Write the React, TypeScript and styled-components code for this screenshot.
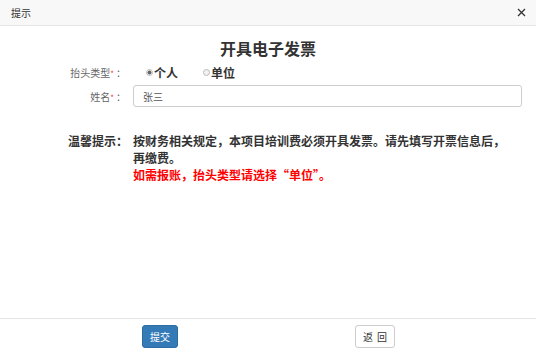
import React from "react";
import styled, { createGlobalStyle } from "styled-components";

const Global = createGlobalStyle`
  html, body { margin: 0; padding: 0; background: #fff; }
  body {
    font-family: "Noto Sans CJK SC", "Liberation Sans", sans-serif;
  }
  * { box-sizing: border-box; }
`;

const Dialog = styled.div`
  width: 536px;
  height: 354px;
  display: flex;
  flex-direction: column;
  background: #fff;
`;

const Header = styled.div`
  height: 26px;
  flex: none;
  display: flex;
  align-items: center;
  justify-content: space-between;
  padding: 0 10px 0 11px;
  background: #f8f8f8;
  border-bottom: 1px solid #e5e5e5;
  font-size: 10px;
  color: #333;
`;

const Close = styled.button`
  border: 0;
  background: transparent;
  padding: 0;
  width: 10px;
  height: 10px;
  display: flex;
  align-items: center;
  justify-content: center;
  cursor: pointer;
`;

const Body = styled.div`
  flex: 1;
  display: flex;
  flex-direction: column;
`;

const Title = styled.h1`
  margin: 12px 0 0;
  height: 20px;
  line-height: 20px;
  text-align: center;
  font-size: 16px;
  font-weight: bold;
  color: #333;
`;

const FormRow = styled.div<{ $mt: number }>`
  display: grid;
  grid-template-columns: 126px 1fr;
  column-gap: 7px;
  align-items: center;
  margin-top: ${(p) => p.$mt}px;
  padding-right: 14px;
`;

const Label = styled.label`
  text-align: right;
  font-size: 10px;
  color: #666;
`;

const Star = styled.span`
  color: #f33;
  font-size: 8px;
  margin-right: 2px;
`;

const Radios = styled.div`
  display: flex;
  gap: 25px;
  padding-left: 13px;
`;

const RadioItem = styled.span`
  display: inline-flex;
  align-items: center;
  font-size: 12px;
  font-weight: bold;
  color: #333;
`;

const Dot = styled.span<{ $on?: boolean }>`
  width: 7px;
  height: 7px;
  border-radius: 50%;
  border: 1px solid #bbb;
  background: ${(p) => (p.$on ? "radial-gradient(circle, #666 0 1.8px, #eee 2.2px)" : "#f2f2f2")};
  margin-right: 1px;
`;

const Input = styled.div`
  height: 22px;
  border: 1px solid #ccc;
  border-radius: 3px;
  padding-left: 9px;
  display: flex;
  align-items: center;
  font-size: 10px;
  color: #555;
`;

const Tip = styled.div`
  display: grid;
  grid-template-columns: 60px 1fr;
  column-gap: 5px;
  margin: 25px 25px 0 68px;
  font-size: 12px;
  font-weight: bold;
  line-height: 17px;
  color: #333;
`;

const Red = styled.span`
  color: #f00;
  display: block;
`;

const Footer = styled.div`
  height: 36px;
  flex: none;
  border-top: 1px solid #e5e5e5;
  display: flex;
  align-items: flex-start;
  padding: 6px 0 0 142px;
  gap: 177px;
`;

const Button = styled.button<{ $primary?: boolean }>`
  height: 23px;
  width: ${(p) => (p.$primary ? 36 : 40)}px;
  padding: 0;
  border-radius: 3px;
  font-family: inherit;
  font-size: 10px;
  border: 1px solid ${(p) => (p.$primary ? "#2e6da4" : "#ccc")};
  background: ${(p) => (p.$primary ? "#337ab7" : "#fff")};
  color: ${(p) => (p.$primary ? "#fff" : "#333")};
  letter-spacing: ${(p) => (p.$primary ? 0 : 4)}px;
  text-indent: ${(p) => (p.$primary ? 0 : 4)}px;
`;

export default function App() {
  return (
    <>
      <Global />
      <Dialog>
        <Header>
          <span>提示</span>
          <Close aria-label="close">
            <svg width="9" height="9" viewBox="0 0 9 9">
              <path d="M1 1L8 8M8 1L1 8" stroke="#333" strokeWidth="1.3" />
            </svg>
          </Close>
        </Header>
        <Body>
          <Title>开具电子发票</Title>
          <FormRow $mt={6}>
            <Label>
              抬头类型<Star>*</Star>：
            </Label>
            <Radios>
              <RadioItem>
                <Dot $on />
                个人
              </RadioItem>
              <RadioItem>
                <Dot />
                单位
              </RadioItem>
            </Radios>
          </FormRow>
          <FormRow $mt={4}>
            <Label>
              姓名<Star>*</Star>：
            </Label>
            <Input>张三</Input>
          </FormRow>
          <Tip>
            <span>温馨提示：</span>
            <div>
              按财务相关规定，本项目培训费必须开具发票。请先填写开票信息后，再缴费。
              <Red>如需报账，抬头类型请选择“单位”。</Red>
            </div>
          </Tip>
        </Body>
        <Footer>
          <Button $primary>提交</Button>
          <Button>返回</Button>
        </Footer>
      </Dialog>
    </>
  );
}
